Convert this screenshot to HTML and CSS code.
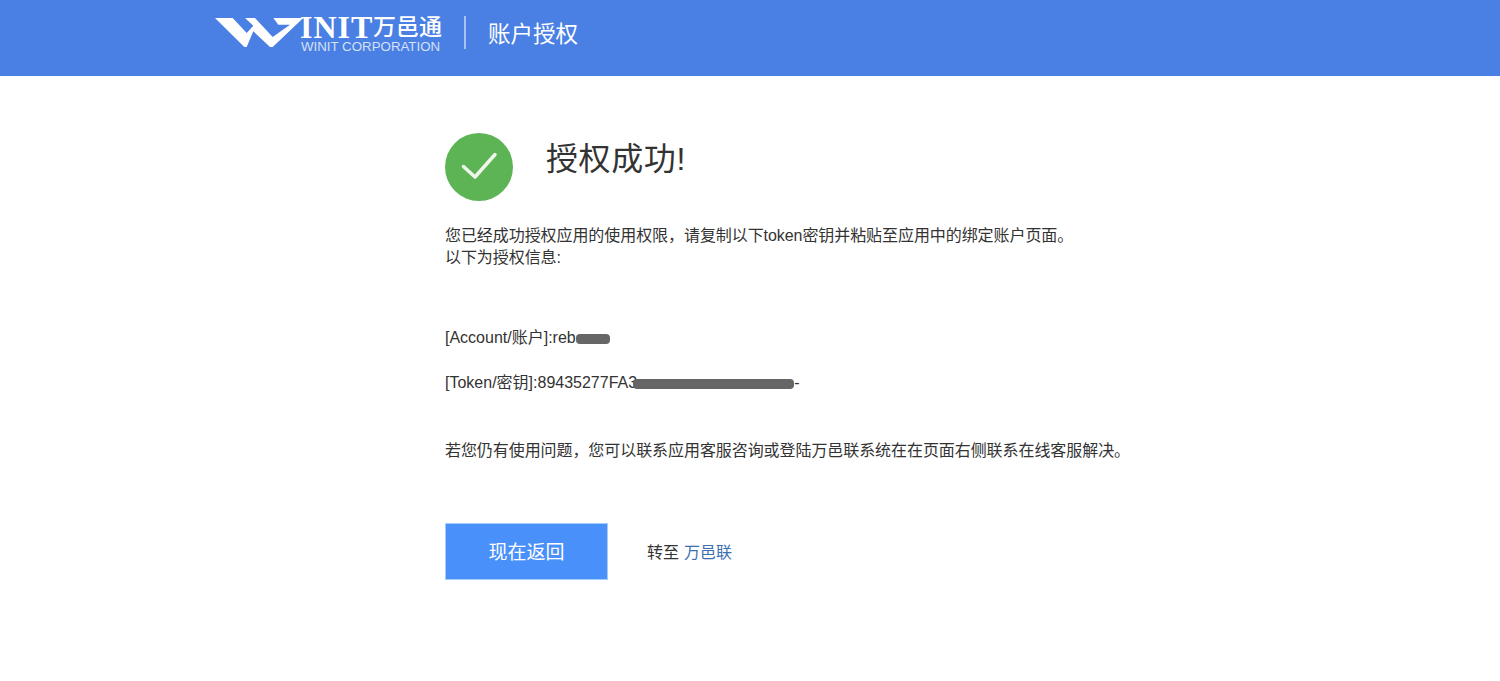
FILE: index.html
```html
<!DOCTYPE html>
<html lang="zh-CN">

<head>
    <meta charset="UTF-8">
    <title>账户授权</title>
    <link rel="stylesheet" href="styles.css">
</head>

<body>
    <div class="header">
        <div class="logo">
            <svg class="logo_mark" width="89" height="30" viewBox="0 0 89 30">
                <path fill="#fff" d="M0 0H17.700L31.700 15L38.300 7.700L30 0H40L57.700 19L75 6.700H63.300L58.300 0H88.300L57.700 29H55L38.300 13.300L31.700 29H29.300Z" />
            </svg>
            <div class="logo_text">
                <div class="logo_top"><span class="logo_init">INIT</span><span class="logo_cn">万邑通</span></div>
                <div class="logo_en">WINIT CORPORATION</div>
            </div>
        </div>
        <div class="line"></div>
        <div class="title">账户授权</div>
    </div>

    <div class="main">
        <div class="result">
            <svg class="ok" width="68" height="68" viewBox="0 0 68 68">
                <circle cx="34" cy="34" r="34" fill="#5cb455" />
                <path d="M18.500 33.500L30 44L50 21.500" fill="none" stroke="#eef6ec" stroke-width="3.500" stroke-linecap="round" stroke-linejoin="round" />
            </svg>
            <h1>授权成功!</h1>
        </div>

        <p class="info">您已经成功授权应用的使用权限，请复制以下token密钥并粘贴至应用中的绑定账户页面。<br>以下为授权信息:</p>

        <p class="row account">[Account/账户]:reb<span class="mask mask1"></span></p>
        <p class="row token">[Token/密钥]:89435277FA3<span class="mask mask2"></span>-</p>

        <p class="help">若您仍有使用问题，您可以联系应用客服咨询或登陆万邑联系统在在页面右侧联系在线客服解决。</p>

        <div class="actions">
            <button>现在返回</button>
            <span class="goto">转至<a href="#">万邑联</a></span>
        </div>
    </div>
</body>

</html>
```

FILE: styles.css
```css
* {
    margin: 0;
    padding: 0;
    box-sizing: border-box;
}

body {
    font-family: "Liberation Sans", "Noto Sans CJK SC", sans-serif;
    font-size: 16px;
    color: #333;
    background-color: #fff;
}

.header {
    display: flex;
    align-items: center;
    height: 76px;
    padding-left: 215px;
    padding-bottom: 11px;
    background-color: #4a7fe3;
    color: #fff;
}

.logo {
    display: flex;
    align-items: flex-start;
    width: 226px;
    height: 38px;
    margin-top: 3px;
}

.logo_mark {
    flex: none;
    margin-top: 3px;
}

.logo_text {
    margin-left: -4px;
}

.logo_top {
    display: flex;
    align-items: center;
    height: 24px;
    white-space: nowrap;
}

.logo_init {
    width: 73px;
    font-family: "Liberation Serif", serif;
    font-weight: bold;
    font-size: 32px;
    line-height: 24px;
    letter-spacing: 1px;
}

.logo_cn {
    font-size: 23px;
    line-height: 24px;
    font-weight: 500;
}

.logo_en {
    margin-left: 1px;
    margin-top: 1px;
    font-size: 13.300px;
    line-height: 14px;
    white-space: nowrap;
    color: #d5e1f8;
}

.line {
    width: 2px;
    height: 33px;
    margin-left: 23px;
    background-color: #a9c3f0;
}

.title {
    margin-left: 22px;
    margin-bottom: 2px;
    font-size: 22.500px;
}

.main {
    padding: 57px 0 0 445px;
}

.result {
    display: flex;
    align-items: flex-start;
    height: 68px;
}

.result h1 {
    margin-left: 33px;
    margin-top: 3px;
    font-size: 32px;
    line-height: 46px;
    font-weight: normal;
    letter-spacing: 0.6px;
}

.info {
    margin-top: 24px;
    line-height: 22px;
    letter-spacing: -0.07px;
}

.row {
    line-height: 22px;
}

.account {
    margin-top: 58px;
}

.token {
    margin-top: 23px;
}

.mask {
    display: inline-block;
    height: 10px;
    vertical-align: -1px;
    border-radius: 4px;
    background-color: #666;
    filter: blur(0.7px);
}

.mask1 {
    width: 34px;
}

.mask2 {
    width: 161px;
    margin-left: -4px;
}

.help {
    margin-top: 46px;
    line-height: 22px;
    letter-spacing: -0.07px;
}

.actions {
    display: flex;
    align-items: center;
    margin-top: 61px;
}

button {
    width: 163px;
    height: 57px;
    padding-bottom: 2px;
    border: 1px solid #a6cbfd;
    background-color: #4a90fa;
    color: #fff;
    font-family: inherit;
    font-size: 19px;
}

.goto {
    margin-left: 39px;
    margin-bottom: 2px;
}

.goto a {
    margin-left: 5px;
    color: #3c6fb0;
    text-decoration: none;
}
```
